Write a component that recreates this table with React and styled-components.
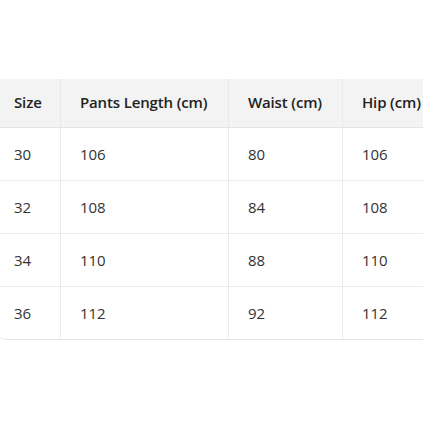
import React from "react";
import styled, { createGlobalStyle } from "styled-components";

const Global = createGlobalStyle`
  html, body { margin: 0; padding: 0; background: #fff; overflow: hidden; }
  body { font-family: "Open Sans", "Noto Sans", sans-serif; }
`;

const Page = styled.div`
  padding-top: 79px;
  width: 423px;
  height: 423px;
  overflow: hidden;
  box-sizing: border-box;
`;

const Table = styled.table`
  border-collapse: separate;
  border-spacing: 0;
  width: 470px;
  table-layout: fixed;
  border-bottom: 1px solid #e6e6e6;
  border-bottom-left-radius: 6px;
`;

const HeadCell = styled.th`
  height: 46px;
  box-sizing: content-box;
  padding: 0 0 2px ${(p) => (p.$first ? 14 : 19)}px;
  text-align: left;
  background: #f3f3f3;
  color: #222;
  font-size: 15px;
  letter-spacing: -0.15px;
  font-weight: 600;
  border-bottom: 1px solid #e4e4e4;
  border-left: ${(p) => (p.$first ? "none" : "1px solid #e8e8e8")};
  white-space: nowrap;
`;

const Cell = styled.td`
  height: 52px;
  box-sizing: content-box;
  padding: 0 0 0 ${(p) => (p.$first ? 14 : 19)}px;
  color: #333;
  font-size: 15px;
  letter-spacing: -0.1px;
  font-weight: 400;
  border-top: ${(p) => (p.$top ? "1px solid #ebebeb" : "none")};
  border-left: ${(p) => (p.$first ? "none" : "1px solid #ebebeb")};
`;

const cols = [60, 168, 114, 128];
const headers = ["Size", "Pants Length (cm)", "Waist (cm)", "Hip (cm)"];
const rows = [
  ["30", "106", "80", "106"],
  ["32", "108", "84", "108"],
  ["34", "110", "88", "110"],
  ["36", "112", "92", "112"],
];

export default function App() {
  return (
    <>
      <Global />
      <Page>
        <Table>
          <colgroup>
            {cols.map((w, i) => (
              <col key={i} style={{ width: w }} />
            ))}
          </colgroup>
          <thead>
            <tr>
              {headers.map((h, i) => (
                <HeadCell key={h} $first={i === 0}>
                  {h}
                </HeadCell>
              ))}
            </tr>
          </thead>
          <tbody>
            {rows.map((r, ri) => (
              <tr key={ri}>
                {r.map((c, ci) => (
                  <Cell key={ci} $first={ci === 0} $top={ri > 0}>
                    {c}
                  </Cell>
                ))}
              </tr>
            ))}
          </tbody>
        </Table>
      </Page>
    </>
  );
}
